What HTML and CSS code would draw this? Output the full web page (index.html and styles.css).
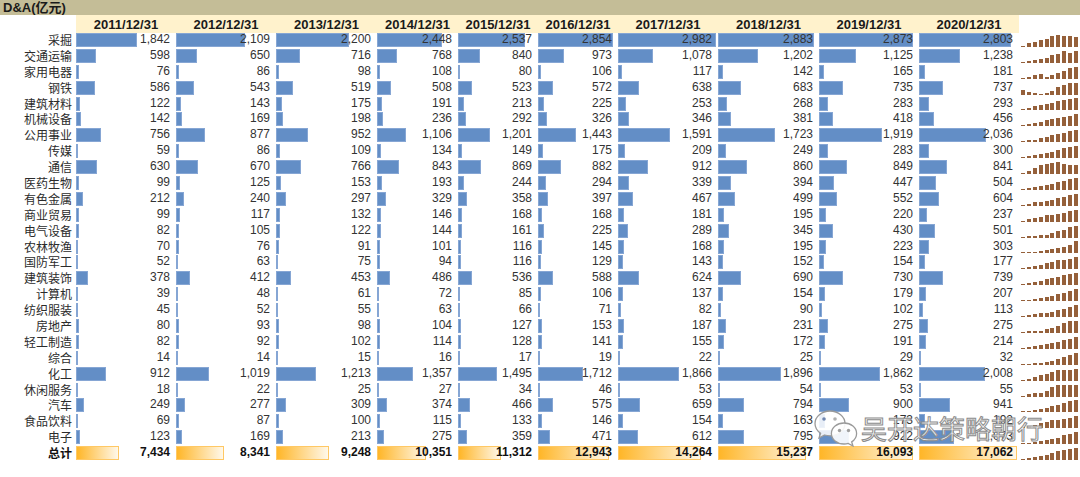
FILE: index.html
```html
<!DOCTYPE html>
<html lang="zh-CN">
<head>
<meta charset="utf-8">
<title>D&amp;A(亿元)</title>
<link rel="stylesheet" href="styles.css">
</head>
<body>
<div class="sheet">
  <div class="title">D&amp;A(亿元)</div>
  <div class="row head">
    <div class="label"></div>
    <div class="yh">2011/12/31</div>
    <div class="yh">2012/12/31</div>
    <div class="yh">2013/12/31</div>
    <div class="yh">2014/12/31</div>
    <div class="yh">2015/12/31</div>
    <div class="yh">2016/12/31</div>
    <div class="yh">2017/12/31</div>
    <div class="yh">2018/12/31</div>
    <div class="yh">2019/12/31</div>
    <div class="yh">2020/12/31</div>
    <div class="blank"></div>
  </div>
  <div id="rows" class="rows"></div>
  <div class="watermark">
    <svg class="wx" width="46" height="38" viewBox="0 0 46 38">
      <path d="M17 2C8.7 2 2 7.6 2 14.5c0 4 2.2 7.4 5.6 9.7L6 29l5.6-3c1.7.5 3.5.8 5.4.8C25.3 26.8 32 21.3 32 14.5S25.3 2 17 2z" fill="rgba(255,255,255,0.85)" stroke="#9a9a9a" stroke-width="1.3"/>
      <path d="M31 14c-7 0-12.6 4.7-12.6 10.5S24 35 31 35c1.5 0 2.9-.2 4.2-.6L40 37l-1.3-4.1c3-2 4.9-5 4.9-8.4C43.6 18.7 38 14 31 14z" fill="rgba(255,255,255,0.9)" stroke="#9a9a9a" stroke-width="1.3"/>
      <circle cx="11" cy="10" r="1.8" fill="#6f86b0"/>
      <circle cx="22" cy="10" r="1.8" fill="#b0b0b0"/>
      <circle cx="26.5" cy="21.5" r="1.7" fill="#a0a0a0"/>
      <circle cx="35.5" cy="21.5" r="1.7" fill="#a0a0a0"/>
    </svg>
    <span class="wm-text">吴开达策略朝行</span>
  </div>
</div>
<script src="app.js"></script>
</body>
</html>
```

FILE: styles.css
```css
* { box-sizing: border-box; }
body {
  margin: 0;
  background: #fff;
  font-family: "Liberation Sans", Arial, "Noto Sans CJK SC", sans-serif;
  color: #333;
}
.sheet {
  position: relative;
  width: 1080px;
  height: 477px;
  overflow: hidden;
}
.title {
  height: 15px;
  background: #c4bd97;
  font-family: "Liberation Sans", "Noto Sans CJK SC", sans-serif;
  font-weight: bold;
  font-size: 13px;
  line-height: 15px;
  padding-left: 3px;
  color: #1a1a1a;
}
.row {
  display: grid;
  grid-template-columns: 76px 100px 100px 101px 81px 80px 80px 100px 101px 100px 100px 61px;
  height: 15.9px;
}
.row.head { height: 17px; }
.yh {
  background: #fff2cc;
  font-weight: bold;
  font-size: 13px;
  line-height: 17px;
  padding-top: 1px;
  text-align: center;
  color: #1a1a1a;
}
.label {
  text-align: right;
  padding-right: 4px;
  font-family: "Noto Sans CJK SC", sans-serif;
  font-size: 12px;
  line-height: 15.9px;
  color: #2b2b2b;
  white-space: nowrap;
}
.cell {
  display: grid;
  align-items: center;
}
.cell > * { grid-area: 1 / 1; }
.bar {
  height: 14px;
  background: #638ec6;
  border: 1px solid #86a6d4;
}
.gbar {
  height: 14px;
  background: linear-gradient(to right, #ffb628, #fff8ea);
  border: 1px solid #ffc864;
}
.num {
  justify-self: end;
  padding-right: 6px;
  font-size: 12px;
  line-height: 15.9px;
  color: #333;
}
.total .num, .total .label {
  font-weight: bold;
  color: #111;
}
.spark {
  display: flex;
  align-items: flex-end;
  gap: 1.9px;
  padding: 0 0 1px 2px;
}
.spark i {
  display: block;
  width: 4px;
  background: #95603a;
}
.watermark {
  position: absolute;
  left: 813px;
  top: 409px;
  display: flex;
  align-items: center;
  gap: 2px;
}
.wm-text {
  font-family: "Noto Sans CJK SC", sans-serif;
  font-size: 26px;
  line-height: 34px;
  color: rgba(255, 255, 255, 0.85);
  -webkit-text-stroke: 1px #8c8c8c;
  letter-spacing: 0;
}
```

FILE: app.js
```js
const data = [
  ["采掘", [1842, 2109, 2200, 2448, 2537, 2854, 2982, 2883, 2873, 2803]],
  ["交通运输", [598, 650, 716, 768, 840, 973, 1078, 1202, 1125, 1238]],
  ["家用电器", [76, 86, 98, 108, 80, 106, 117, 142, 165, 181]],
  ["钢铁", [586, 543, 519, 508, 523, 572, 638, 683, 735, 737]],
  ["建筑材料", [122, 143, 175, 191, 213, 225, 253, 268, 283, 293]],
  ["机械设备", [142, 169, 198, 236, 292, 326, 346, 381, 418, 456]],
  ["公用事业", [756, 877, 952, 1106, 1201, 1443, 1591, 1723, 1919, 2036]],
  ["传媒", [59, 86, 109, 134, 149, 175, 209, 249, 283, 300]],
  ["通信", [630, 670, 766, 843, 869, 882, 912, 860, 849, 841]],
  ["医药生物", [99, 125, 153, 193, 244, 294, 339, 394, 447, 504]],
  ["有色金属", [212, 240, 297, 329, 358, 397, 467, 499, 552, 604]],
  ["商业贸易", [99, 117, 132, 146, 168, 168, 181, 195, 220, 237]],
  ["电气设备", [82, 105, 122, 144, 161, 225, 289, 345, 430, 501]],
  ["农林牧渔", [70, 76, 91, 101, 116, 145, 168, 195, 223, 303]],
  ["国防军工", [52, 63, 75, 94, 116, 129, 143, 152, 154, 177]],
  ["建筑装饰", [378, 412, 453, 486, 536, 588, 624, 690, 730, 739]],
  ["计算机", [39, 48, 61, 72, 85, 106, 137, 154, 179, 207]],
  ["纺织服装", [45, 52, 55, 63, 66, 71, 82, 90, 102, 113]],
  ["房地产", [80, 93, 98, 104, 127, 153, 187, 231, 275, 275]],
  ["轻工制造", [82, 92, 102, 114, 128, 141, 155, 172, 191, 214]],
  ["综合", [14, 14, 15, 16, 17, 19, 22, 25, 29, 32]],
  ["化工", [912, 1019, 1213, 1357, 1495, 1712, 1866, 1896, 1862, 2008]],
  ["休闲服务", [18, 22, 25, 27, 34, 46, 53, 54, 53, 55]],
  ["汽车", [249, 277, 309, 374, 466, 575, 659, 794, 900, 941]],
  ["食品饮料", [69, 87, 100, 115, 133, 146, 154, 163, 173, 192]],
  ["电子", [123, 169, 213, 275, 359, 471, 612, 795, 922, 1073]]
];
const totals = [7434, 8341, 9248, 10351, 11312, 12943, 14264, 15237, 16093, 17062];
const totalPx = [43, 48, 53, 49, 43, 71, 83, 88, 94, 98];
const MAX = 2982;
const fmt = v => v.toLocaleString("en-US");

function el(tag, cls, text) {
  const e = document.createElement(tag);
  if (cls) e.className = cls;
  if (text !== undefined) e.textContent = text;
  return e;
}

function spark(vals) {
  const s = el("div", "spark");
  const mn = Math.min(...vals), mx = Math.max(...vals);
  vals.forEach(v => {
    const i = el("i");
    const h = mx === mn ? 6 : 1 + (v - mn) / (mx - mn) * 11;
    i.style.height = h.toFixed(2) + "px";
    s.appendChild(i);
  });
  return s;
}

const rows = document.getElementById("rows");
data.forEach(([name, vals]) => {
  const r = el("div", "row");
  r.appendChild(el("div", "label", name));
  vals.forEach(v => {
    const c = el("div", "cell");
    const b = el("div", "bar");
    b.style.width = (v / MAX * 98).toFixed(2) + "%";
    c.appendChild(b);
    c.appendChild(el("span", "num", fmt(v)));
    r.appendChild(c);
  });
  r.appendChild(spark(vals));
  rows.appendChild(r);
});

const t = el("div", "row total");
t.appendChild(el("div", "label", "总计"));
totals.forEach((v, k) => {
  const c = el("div", "cell");
  const b = el("div", "gbar");
  b.style.width = totalPx[k] + "px";
  c.appendChild(b);
  c.appendChild(el("span", "num", fmt(v)));
  t.appendChild(c);
});
t.appendChild(spark(totals));
rows.appendChild(t);
```
